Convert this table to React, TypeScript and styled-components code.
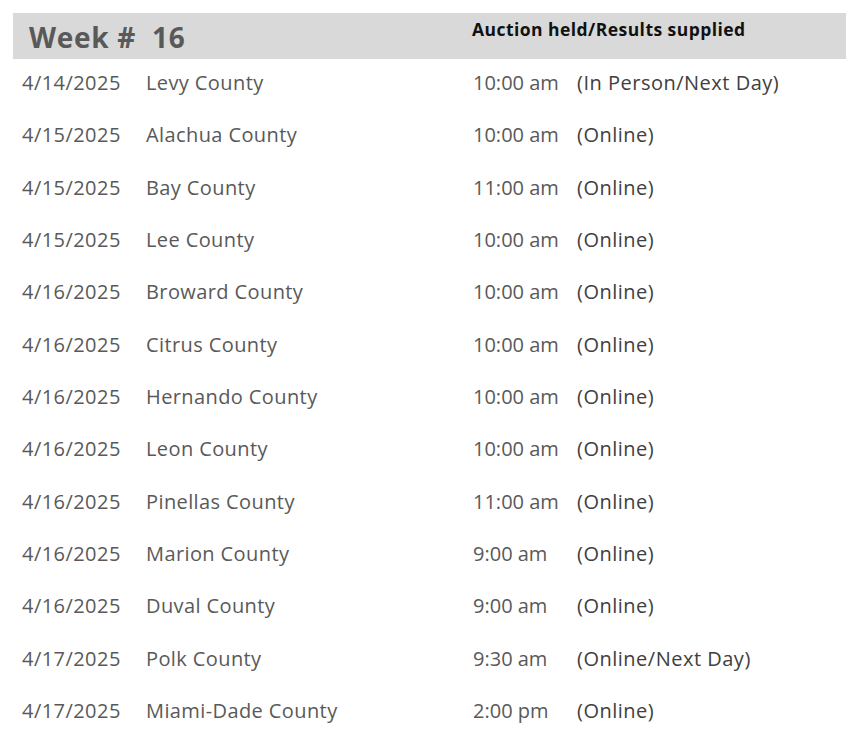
import React from "react";
import styled, { createGlobalStyle } from "styled-components";

const GlobalStyle = createGlobalStyle`
  body {
    margin: 0;
    background: #ffffff;
    font-family: "Open Sans", "Noto Sans", sans-serif;
  }
`;

const Page = styled.div`
  width: 846px;
  padding-top: 13px;
  display: flex;
  flex-direction: column;
`;

const WeekBar = styled.div`
  margin-left: 13px;
  height: 46px;
  background: #d9d9d9;
  display: grid;
  grid-template-columns: 459px 1fr;
  align-items: start;
`;

const WeekTitle = styled.div`
  padding-left: 16px;
  margin-top: 7px;
  font-size: 28px;
  font-weight: 700;
  color: #595959;
  white-space: pre;
  letter-spacing: 0.7px;
  line-height: 34px;
`;

const HeldLabel = styled.div`
  margin-top: 4px;
  font-size: 17.5px;
  font-weight: 700;
  color: #111111;
  letter-spacing: 0.45px;
  line-height: 24px;
`;

const Rows = styled.div`
  display: flex;
  flex-direction: column;
`;

const Row = styled.div`
  height: 52.33px;
  padding-left: 22px;
  padding-bottom: 5px;
  box-sizing: border-box;
  display: grid;
  grid-template-columns: 124px 327px 104px 1fr;
  align-items: center;
  font-size: 20px;
  color: #595959;
`;

const Cell = styled.span<{ dark?: boolean; spread?: number }>`
  color: ${({ dark }) => (dark ? "#404040" : "#595959")};
  letter-spacing: ${({ spread }) => spread ?? 0}px;
  white-space: nowrap;
`;

const auctions = [
  ["4/14/2025", "Levy County", "10:00 am", "(In Person/Next Day)"],
  ["4/15/2025", "Alachua County", "10:00 am", "(Online)"],
  ["4/15/2025", "Bay County", "11:00 am", "(Online)"],
  ["4/15/2025", "Lee County", "10:00 am", "(Online)"],
  ["4/16/2025", "Broward County", "10:00 am", "(Online)"],
  ["4/16/2025", "Citrus County", "10:00 am", "(Online)"],
  ["4/16/2025", "Hernando County", "10:00 am", "(Online)"],
  ["4/16/2025", "Leon County", "10:00 am", "(Online)"],
  ["4/16/2025", "Pinellas County", "11:00 am", "(Online)"],
  ["4/16/2025", "Marion County", "9:00 am", "(Online)"],
  ["4/16/2025", "Duval County", "9:00 am", "(Online)"],
  ["4/17/2025", "Polk County", "9:30 am", "(Online/Next Day)"],
  ["4/17/2025", "Miami-Dade County", "2:00 pm", "(Online)"],
];

const App = () => {
  return (
    <>
      <GlobalStyle />
      <Page>
        <WeekBar>
          <WeekTitle>Week #  16</WeekTitle>
          <HeldLabel>Auction held/Results supplied</HeldLabel>
        </WeekBar>
        <Rows>
          {auctions.map(([date, county, time, kind], i) => (
            <Row key={i}>
              <Cell spread={0.45}>{date}</Cell>
              <Cell spread={0.4}>{county}</Cell>
              <Cell>{time}</Cell>
              <Cell dark spread={0.5}>
                {kind}
              </Cell>
            </Row>
          ))}
        </Rows>
      </Page>
    </>
  );
};

export default App;
